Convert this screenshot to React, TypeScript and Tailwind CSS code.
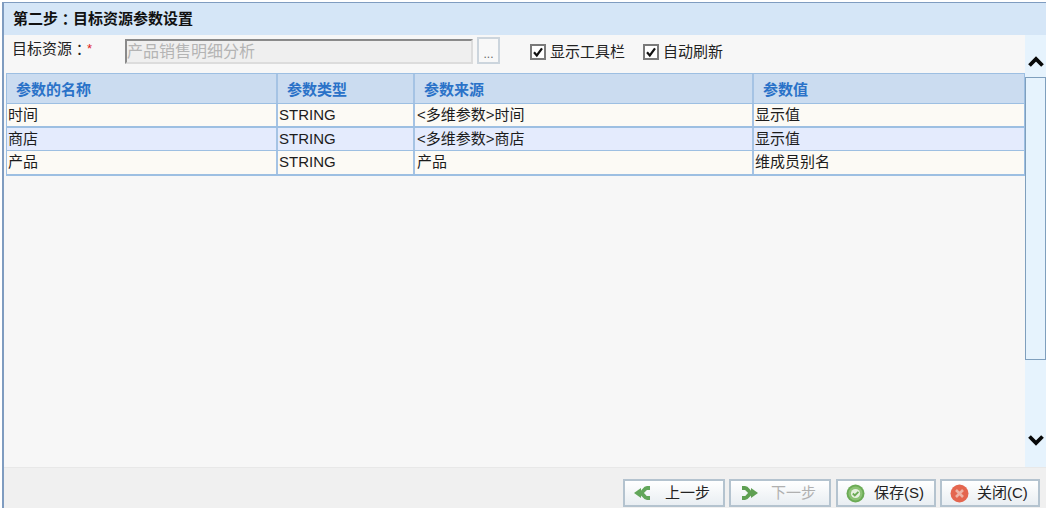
const FONT = "font-['Liberation_Sans','Noto_Sans_CJK_SC',sans-serif]";

const rows = [
  { name: '时间', type: 'STRING', source: '<多维参数>时间', value: '显示值', active: false },
  { name: '商店', type: 'STRING', source: '<多维参数>商店', value: '显示值', active: true },
  { name: '产品', type: 'STRING', source: '产品', value: '维成员别名', active: false },
];

// 全角冒号居中的字形只有 TC 字体有
function Colon() {
  return <span className="font-['Noto_Sans_CJK_TC',sans-serif]">：</span>;
}

function Check({ label }: { label: string }) {
  return (
    <div className="flex items-center gap-[4px]">
      <span className="flex h-[16px] w-[16px] items-center justify-center border-2 border-[#7a7a7a] bg-white">
        <svg width="12" height="12" viewBox="0 0 12 12">
          <path d="M2 6.2 L4.8 9.4 L10 2.4" fill="none" stroke="#111" strokeWidth="2.2" />
        </svg>
      </span>
      <span className="text-[15px] leading-[18px] text-[#222]">{label}</span>
    </div>
  );
}

function Chevron({ down }: { down?: boolean }) {
  return (
    <svg width="16" height="12" viewBox="0 0 16 12">
      <path d={down ? 'M1.5 2.5 L8 9 L14.5 2.5' : 'M1.5 9.5 L8 3 L14.5 9.5'} fill="none" stroke="#080808" strokeWidth="3.8" />
    </svg>
  );
}

function BranchIcon({ flip, color }: { flip?: boolean; color: string }) {
  return (
    <svg width="20" height="18" viewBox="0 0 20 18" className={flip ? '-scale-x-100' : ''}>
      <path d="M1 9 L8 4 L8 14 Z" fill={color} />
      <path d="M7 9 C10.5 9 11 4 14 4 L17 4 M7 9 C10.5 9 11 14 14 14 L17 14" fill="none" stroke={color} strokeWidth="4" />
    </svg>
  );
}

function SaveIcon() {
  return (
    <svg width="19" height="19" viewBox="0 0 19 19">
      <circle cx="9.5" cy="9.5" r="9" fill="#6bab55" />
      <circle cx="9.5" cy="9.5" r="7" fill="#8cc274" />
      <circle cx="9.5" cy="9.5" r="4.6" fill="#e6f1df" />
      <path d="M6.8 9.5 L8.8 11.5 L12.4 7.8" fill="none" stroke="#6bab55" strokeWidth="1.8" />
    </svg>
  );
}

function CloseIcon() {
  return (
    <svg width="19" height="19" viewBox="0 0 19 19">
      <circle cx="9.5" cy="9.5" r="9" fill="#e4664f" />
      <path d="M6 6 L13 13 M13 6 L6 13" stroke="#eeb4a6" strokeWidth="2.6" />
    </svg>
  );
}

function Btn({ w, icon, label, disabled, gap }: { w: string; icon: React.ReactNode; label: string; disabled?: boolean; gap: string }) {
  return (
    <div className={`flex h-[28px] shrink-0 items-center border-2 border-[#b4c3cf] bg-gradient-to-b from-[#ffffff] to-[#e9eef2] pl-[8px] ${w} ${gap}`}>
      {icon}
      <span className={`text-[15px] leading-[18px] ${disabled ? 'text-[#b0b0b0]' : 'text-[#222]'}`}>{label}</span>
    </div>
  );
}

export default function App() {
  return (
    <div className={`h-[508px] w-[1049px] overflow-hidden bg-white pl-[2px] pt-[2px] pr-[3px] ${FONT}`}>
      <div className="flex h-[506px] flex-col border-l-2 border-t border-[#7f9cc0] bg-[#f7f7f7]">
        <div className="flex h-[32px] shrink-0 items-center bg-[#d5e6f7] pl-[9px] text-[15px] font-bold text-[#111]">
          第二步<Colon />目标资源参数设置
        </div>
        <div className="flex min-h-0 flex-1">
          <div className="min-w-0 flex-1 pl-[2px]">
            <div className="flex h-[38px] items-start">
              <div className="mt-[5px] flex w-[119px] shrink-0 pl-[6px] text-[15px] leading-[18px] text-[#222]">
                目标资源<Colon /><span className="text-[13px] text-[#e02020]">*</span>
              </div>
              <div className="mt-[4px] flex h-[25px] w-[348px] shrink-0 items-center border-2 border-b-[#dcdcdc] border-l-[#8a8a8a] border-r-[#dcdcdc] border-t-[#8a8a8a] bg-[#efefef] text-[16px] text-[#b4b4b4]">
                产品销售明细分析
              </div>
              <div className="ml-[4px] mt-[2px] flex h-[27px] w-[23px] shrink-0 items-end justify-center border-2 border-[#ccd5dd] bg-[#f8f8f8] pb-[2px] text-[12px] leading-[12px] text-[#666]">
                ...
              </div>
              <div className="ml-[30px] mt-[8px] flex items-center gap-[18px]">
                <Check label="显示工具栏" />
                <Check label="自动刷新" />
              </div>
            </div>
            <div className="border-2 border-t-1 border-[#9dbfe2] border-x-1">
              <div className="flex h-[30px] items-center border-b border-[#9dbfe2] bg-[#cbdcf0] text-[15px] font-bold text-[#2a72c8]">
                <div className="flex h-full w-[271px] shrink-0 items-center border-r-2 border-[#a5c3e4] pl-[9px] pt-[3px]">参数的名称</div>
                <div className="flex h-full w-[137px] shrink-0 items-center border-r-2 border-[#a5c3e4] pl-[9px] pt-[3px]">参数类型</div>
                <div className="flex h-full w-[339px] shrink-0 items-center border-r-2 border-[#a5c3e4] pl-[9px] pt-[3px]">参数来源</div>
                <div className="flex h-full flex-1 items-center pl-[9px] pt-[3px]">参数值</div>
              </div>
              {rows.map((r, i) => (
                <div
                  key={r.name}
                  className={`flex items-center text-[15px] text-[#1c1c1c] ${r.active ? 'bg-[#e4ebfd]' : 'bg-[#fcfaf5]'} ${i < 2 ? 'border-b border-[#9dbfe2]' : ''} ${i === 0 ? 'h-[24px] border-b-2' : 'h-[23px]'}`}
                >
                  <div className="flex h-full w-[271px] shrink-0 items-center border-r-2 border-[#a5c3e4] pl-[1px]">{r.name}</div>
                  <div className="flex h-full w-[137px] shrink-0 items-center border-r-2 border-[#a5c3e4] pl-[1px]">{r.type}</div>
                  <div className="flex h-full w-[339px] shrink-0 items-center border-r-2 border-[#a5c3e4] pl-[2px]">{r.source}</div>
                  <div className="flex h-full flex-1 items-center pl-[1px]">{r.value}</div>
                </div>
              ))}
            </div>
          </div>
          <div className="flex w-[21px] shrink-0 flex-col bg-[#e6f3fd]">
            <div className="flex h-[42px] items-end justify-center pb-[9px]">
              <Chevron />
            </div>
            <div className="h-[283px] border border-[#7f9fbd] bg-[#e6f3fd]" />
            <div className="flex h-[107px] items-end justify-center pb-[21px]">
              <Chevron down />
            </div>
          </div>
        </div>
        <div className="flex h-[41px] shrink-0 gap-[4px] border-t border-[#e8e8e8] bg-[#f0f0f0] pl-[619px] pt-[11px]">
          <Btn w="w-[102px]" gap="gap-[12px]" icon={<BranchIcon color="#62a65a" />} label="上一步" />
          <Btn w="w-[102px]" gap="gap-[12px]" icon={<BranchIcon flip color="#5f9f52" />} label="下一步" disabled />
          <div className="ml-px">
            <Btn w="w-[100px]" gap="gap-[9px]" icon={<SaveIcon />} label="保存(S)" />
          </div>
          <Btn w="w-[100px]" gap="gap-[8px]" icon={<CloseIcon />} label="关闭(C)" />
        </div>
      </div>
    </div>
  );
}
